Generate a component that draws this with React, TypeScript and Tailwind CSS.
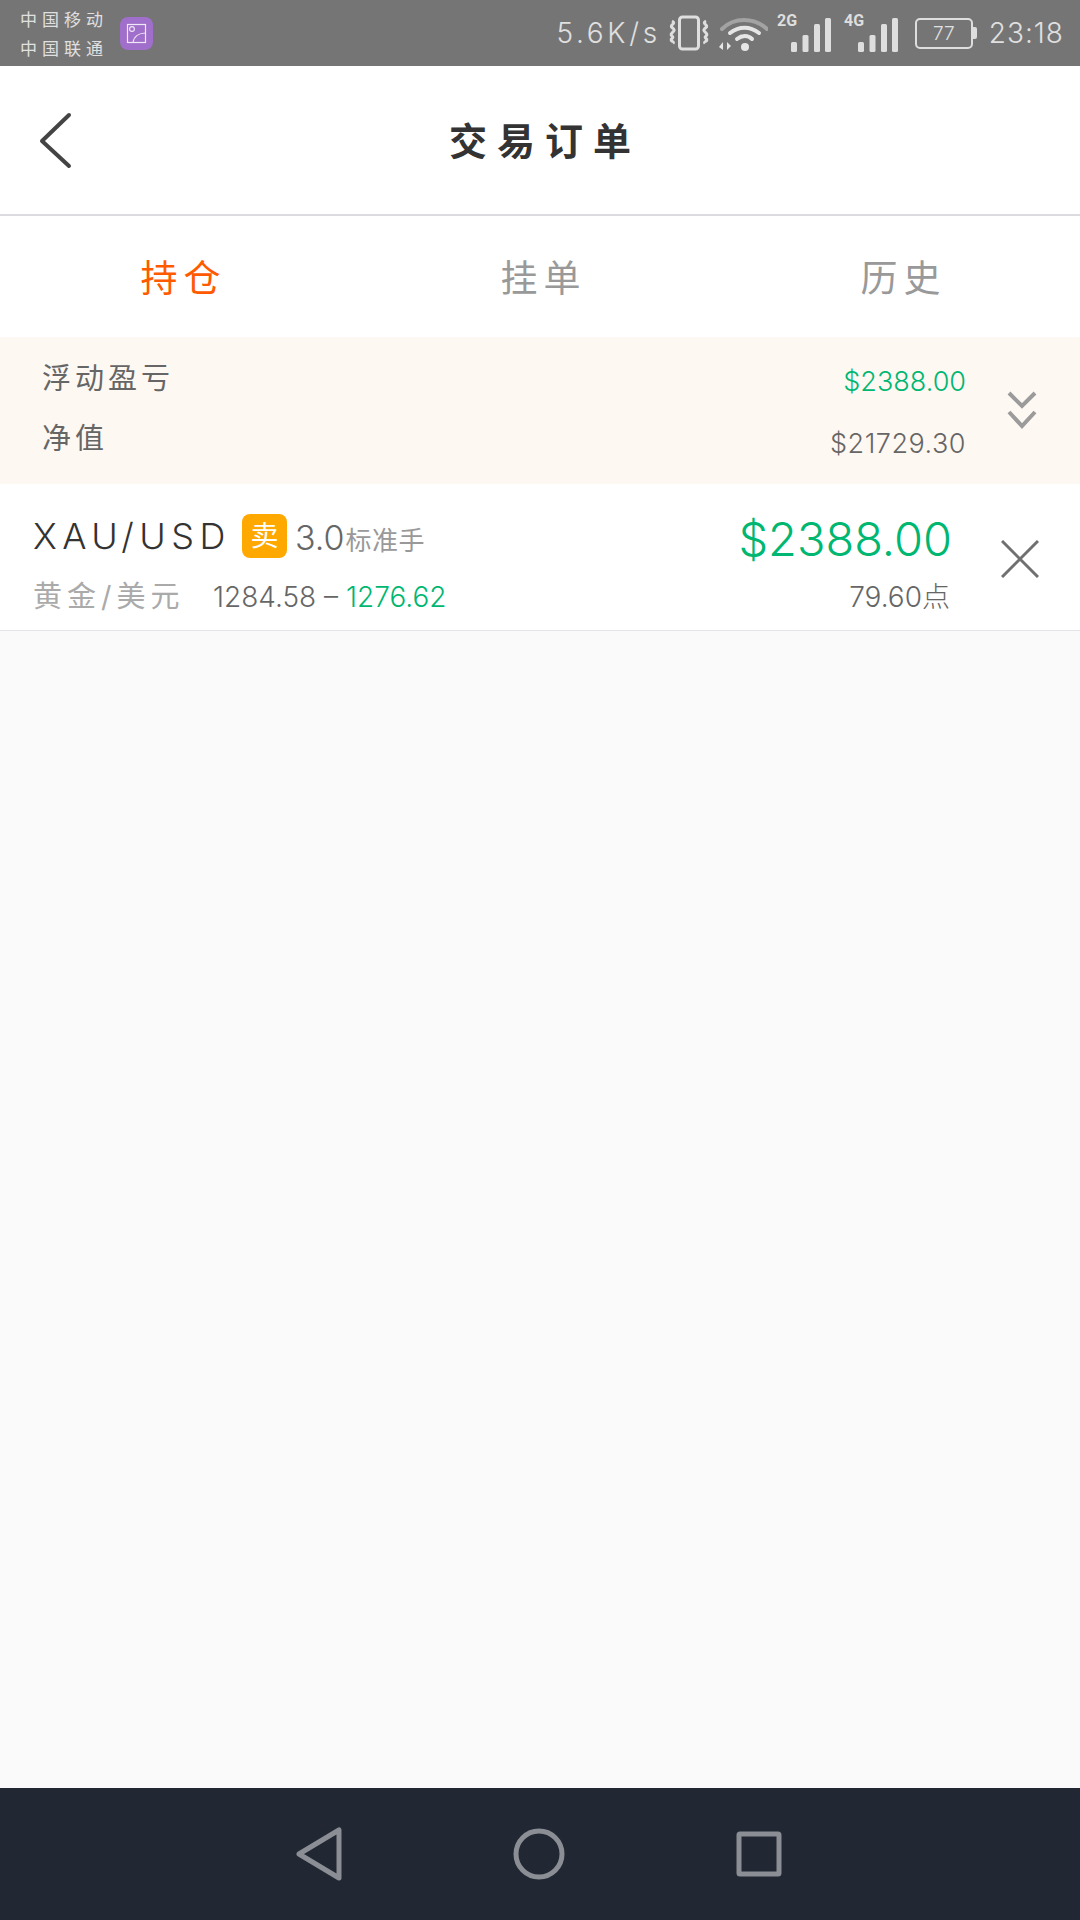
const cjk = { fontFamily: '"Inter", "Noto Sans CJK SC", sans-serif' };

function SignalIcon({ label }: { label: string }) {
  return (
    <svg className="w-[56px] h-[46px]" viewBox="0 0 56 46" fill="#dedede">
      <text x="0" y="16" fontSize="16" fontWeight="700" fontFamily="Roboto, sans-serif">{label}</text>
      <rect x="14" y="32" width="6" height="10" rx="1.5" />
      <rect x="25.500" y="25" width="6" height="17" rx="1.5" />
      <rect x="37" y="14" width="6" height="28" rx="1.5" />
      <rect x="48" y="8" width="6" height="34" rx="1.5" />
    </svg>
  );
}

export default function App() {
  return (
    <div className="w-[1080px] h-[1920px] flex flex-col bg-[#fafafa] overflow-hidden" style={cjk}>
      {/* status bar */}
      <div className="h-[66px] bg-[#757575] flex items-center justify-between pl-[20px] pr-[16px] text-[#e0e0e0]">
        <div className="flex items-center gap-[12px]">
          <div className="flex flex-col text-[17px] leading-[29px] tracking-[5px] mt-[4px]">
            <span>中国移动</span>
            <span>中国联通</span>
          </div>
          <svg className="w-[33px] h-[33px]" viewBox="0 0 33 33" fill="none">
            <rect width="33" height="33" rx="8" fill="#a06fcb" />
            <rect x="7.5" y="7.5" width="18" height="18" stroke="#efe6f6" strokeWidth="1.2" />
            <circle cx="12" cy="12" r="2.4" stroke="#efe6f6" strokeWidth="1.1" />
            <path d="M13 25.5c1-6 6-9.500 12.500-9.500" stroke="#efe6f6" strokeWidth="1.2" />
          </svg>
        </div>
        <div className="flex items-center">
          <span className="text-[28px] tracking-[3.700px] font-light">5.6K/s</span>
          <svg className="w-[40px] h-[36px] ml-[8px]" viewBox="0 0 40 36" fill="none" stroke="#dedede">
            <rect x="10.500" y="2" width="19" height="32" rx="3" strokeWidth="3" />
            <path d="M3 6c5 2.500-3 4 0 6.500s3 2.500 0 5.500 3 3 0 5.500 3 3 1 5M37 6c-5 2.500 3 4 0 6.500s-3 2.500 0 5.500-3 3 0 5.500-3 3-1 5" strokeWidth="3" />
          </svg>
          <svg className="w-[50px] h-[36px] ml-[9px]" viewBox="0 0 50 36" fill="none">
            <path d="M4 14C16 2 36 2 49 14" stroke="#a3a3a3" strokeWidth="4" strokeLinecap="round" />
            <path d="M12 18c9-7 20-7 29 0M19 24c5-4 11-4 15 0" stroke="#e6e6e6" strokeWidth="4" strokeLinecap="round" />
            <circle cx="27" cy="32" r="4" fill="#e6e6e6" />
            <path d="M5 27v8l-4-3zM9 27v8l4-4z" fill="#e6e6e6" />
          </svg>
          <div className="ml-[9px]"><SignalIcon label="2G" /></div>
          <div className="ml-[11px]"><SignalIcon label="4G" /></div>
          <div className="ml-[15px] w-[58px] h-[31px] border-[2.500px] border-[#dedede] rounded-[5px] flex items-center justify-center text-[19px] font-light leading-none">
            77
          </div>
          <div className="w-[4px] h-[12px] bg-[#dedede] rounded-r-[2px]" />
          <span className="ml-[12px] text-[28px] font-light tracking-[1px]">23:18</span>
        </div>
      </div>

      {/* title bar */}
      <div className="relative h-[150px] bg-white border-b-2 border-[#dcdce0] flex items-center justify-center shrink-0">
        <svg className="absolute left-[38px] top-[45px] w-[36px] h-[58px]" viewBox="0 0 36 58" fill="none" stroke="#444" strokeWidth="4" strokeLinecap="round" strokeLinejoin="round">
          <path d="M31 4 4 30l27 25" />
        </svg>
        <h1 className="text-[38px] font-bold text-[#333] tracking-[10px] pl-[10px] mt-[3px]">交易订单</h1>
      </div>

      {/* tabs */}
      <div className="h-[121px] bg-white flex items-center text-[37px] tracking-[6px] text-[#999] shrink-0 pt-[4px]">
        <div className="flex-1 text-center pl-[7px] text-[#ff5a00]">持仓</div>
        <div className="flex-1 text-center pl-[7px]">挂单</div>
        <div className="flex-1 text-center pl-[7px]">历史</div>
      </div>

      {/* summary */}
      <div className="h-[147px] bg-[#fef8f2] flex items-center pl-[42px] pr-[43px] shrink-0">
        <div className="flex flex-col gap-[26px] text-[#666] text-[29px] tracking-[4px] leading-[34px] -mt-[4px]">
          <span>浮动盈亏</span>
          <span>净值</span>
        </div>
        <div className="ml-auto flex flex-col items-end gap-[30px] text-[27px] font-light leading-[32px] text-[#666] mt-[4px]">
          <span className="text-[#00b772]">$2388.00</span>
          <span className="tracking-[0.500px]">$21729.30</span>
        </div>
        <svg className="ml-[41px] w-[30px] h-[38px] -mt-[1px]" viewBox="0 0 30 38" fill="none" stroke="#9b9b9b" strokeWidth="4">
          <path d="m2 2 13 13L28 2M2 21l13 14 13-14" />
        </svg>
      </div>

      {/* order row */}
      <div className="h-[147px] bg-white border-b border-[#e4e4e8] flex items-start pl-[33px] pr-[41px] pt-[30px] shrink-0">
        <div className="flex flex-col">
          <div className="flex items-center h-[44px]">
            <span className="text-[36px] font-light text-[#333] tracking-[5.500px]">XAU/USD</span>
            <span className="ml-[11px] w-[45px] h-[44px] rounded-[8px] bg-[#ffa800] text-white text-[28px] flex items-center justify-center">卖</span>
            <span className="ml-[8px] text-[34px] font-light text-[#666] mt-[2px]">3.0</span>
            <span className="text-[26px] tracking-[0.500px] text-[#999] mt-[9px] ml-[1px]">标准手</span>
          </div>
          <div className="flex items-center mt-[21px] h-[36px]">
            <span className="w-[180px] text-[29px] tracking-[5px] text-[#aaa]">黄金/美元</span>
            <span className="text-[28px] font-light text-[#666] whitespace-pre">1284.58 – </span>
            <span className="text-[28px] font-light text-[#00b772]">1276.62</span>
          </div>
        </div>
        <div className="ml-auto flex flex-col items-end">
          <span className="text-[47px] font-light text-[#00b772] leading-[50px]">$2388.00</span>
          <span className="text-[28px] font-light text-[#666] mt-[12px] mr-[2px]">79.60点</span>
        </div>
        <svg className="ml-[49px] mt-[26px] w-[38px] h-[38px]" viewBox="0 0 38 38" fill="none" stroke="#707070" strokeWidth="3">
          <path d="m1 1 36 36M37 1 1 37" />
        </svg>
      </div>

      <div className="flex-1" />

      {/* nav bar */}
      <div className="h-[132px] bg-[#212833] flex items-center justify-center pr-[4px] shrink-0">
        <svg className="w-[50px] h-[54px]" viewBox="0 0 50 54" fill="none" stroke="#8b8e94" strokeWidth="5" strokeLinejoin="round">
          <path d="M4 27 44 3v48z" />
        </svg>
        <svg className="ml-[168px] w-[52px] h-[52px]" viewBox="0 0 52 52" fill="none" stroke="#8b8e94" strokeWidth="5">
          <circle cx="26" cy="26" r="23" />
        </svg>
        <svg className="ml-[171px] w-[46px] h-[46px]" viewBox="0 0 46 46" fill="none" stroke="#8b8e94" strokeWidth="5" strokeLinejoin="round">
          <rect x="3" y="3" width="40" height="40" rx="1" />
        </svg>
      </div>
    </div>
  );
}
